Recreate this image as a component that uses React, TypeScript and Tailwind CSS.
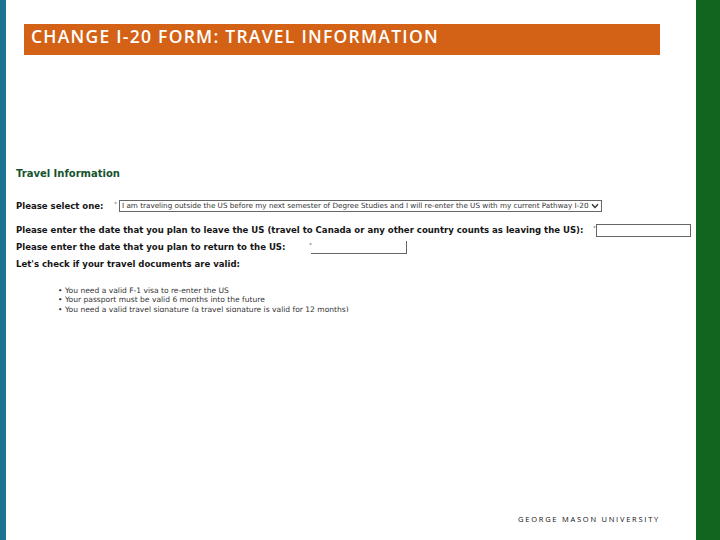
import React from "react";

const sans = "font-['Open_Sans','Liberation_Sans',sans-serif]";
const dv = "font-['DejaVu_Sans',sans-serif]";

export default function App() {
  return (
    <div className="flex h-[540px] w-[720px] overflow-hidden bg-white">
      <div className="w-[6px] shrink-0 bg-[#1c7391]" />
      <main className="flex min-w-0 flex-1 flex-col">
        <div className="ml-[18px] mt-[24px] flex h-[31px] w-[636px] items-start bg-[#d46216] pl-[7px] pt-[3px]">
          <h1 className={`${sans} whitespace-nowrap text-[17.5px] font-semibold leading-[18px] tracking-[1.25px] text-white`}>
            CHANGE I-20 FORM: TRAVEL INFORMATION
          </h1>
        </div>

        <section className={`${dv} ml-[10px] mt-[112px] flex flex-col text-[8.55px] font-bold leading-none text-[#151515]`}>
          <h2 className="h-[13px] text-[10px] leading-[13px] text-[#14532d]">Travel Information</h2>

          <div className="mt-[20px] flex h-[12px] items-center">
            <span className="w-[98px] whitespace-nowrap">Please select one:</span>
            <span className="mb-[5px] w-[5px] text-[6px] font-normal text-[#777]">*</span>
            <div className="flex h-[12px] w-[483px] items-center justify-between border border-[#666] pl-[2px] pr-[2px]">
              <span className="whitespace-nowrap text-[7.22px] font-normal text-[#333]">
                I am traveling outside the US before my next semester of Degree Studies and I will re-enter the US with my current Pathway I-20
              </span>
              <svg width="8" height="6" viewBox="0 0 8 6" className="shrink-0">
                <path d="M1 1.2 L4 4.4 L7 1.2" fill="none" stroke="#333" strokeWidth="1.4" />
              </svg>
            </div>
          </div>

          <div className="mt-[12px] flex h-[13px] items-center">
            <span className="w-[577px] whitespace-nowrap">Please enter the date that you plan to leave the US (travel to Canada or any other country counts as leaving the US):</span>
            <span className="mb-[5px] w-[3px] text-[6px] font-normal text-[#777]">*</span>
            <div className="h-[13px] w-[95px] border border-[#666]" />
          </div>

          <div className="mt-[4px] flex h-[13px] items-center">
            <span className="w-[293px] whitespace-nowrap">Please enter the date that you plan to return to the US:</span>
            <span className="mb-[6px] w-[2px] text-[6px] font-normal text-[#777]">*</span>
            <div className="h-[13px] w-[96px] border-b border-r border-[#666]" />
          </div>

          <p className="mt-[4px] h-[12px] whitespace-nowrap leading-[12px]">Let's check if your travel documents are valid:</p>

          <ul className="ml-[42px] mt-[16px] h-[26px] overflow-hidden text-[7.55px] font-normal leading-[9.3px] text-[#333]">
            <li className="flex"><span className="w-[7px]">•</span>You need a valid F-1 visa to re-enter the US</li>
            <li className="flex"><span className="w-[7px]">•</span>Your passport must be valid 6 months into the future</li>
            <li className="flex"><span className="w-[7px]">•</span>You need a valid travel signature (a travel signature is valid for 12 months)</li>
          </ul>
        </section>

        <footer className={`${sans} mr-[36px] mt-auto mb-[16px] text-right text-[7.5px] font-medium leading-[10px] tracking-[1.75px] text-[#111]`}>
          GEORGE MASON UNIVERSITY
        </footer>
      </main>
      <div className="w-[24px] shrink-0 bg-[#11651f]" />
    </div>
  );
}
